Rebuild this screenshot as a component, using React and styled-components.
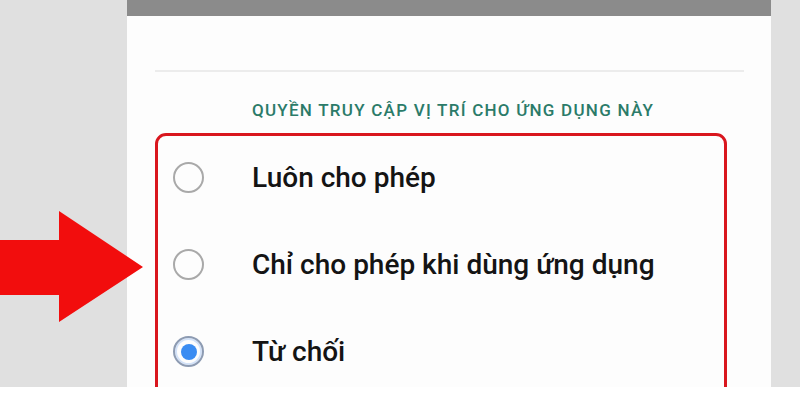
import React from "react";
import styled, { createGlobalStyle } from "styled-components";

const GlobalStyle = createGlobalStyle`
  html, body {
    margin: 0;
    padding: 0;
    background: #ffffff;
  }
  body {
    font-family: Roboto, "Noto Sans", "Liberation Sans", sans-serif;
  }
`;

const HEADER_TEXT = "QUYỀN TRUY CẬP VỊ TRÍ CHO ỨNG DỤNG NÀY";

const options = [
  { id: "always", label: "Luôn cho phép", checked: false },
  { id: "while-using", label: "Chỉ cho phép khi dùng ứng dụng", checked: false },
  { id: "deny", label: "Từ chối", checked: true },
];

const Arrow = () => (
  <ArrowWrap>
    <svg width="146" height="112" viewBox="0 0 146 112">
      <polygon points="0,29 59,29 59,0 143,56 59,111 59,84 0,84" fill="#f20d0d" />
    </svg>
  </ArrowWrap>
);

const App = () => {
  return (
    <>
      <GlobalStyle />
      <Page>
        <SideGutter />
        <PhonePanel>
          <StatusBar />
          <Content>
            <Divider />
            <SectionTitle>{HEADER_TEXT}</SectionTitle>
            <HighlightBox>
              {options.map(({ id, label, checked }) => (
                <OptionRow key={id}>
                  <Radio checked={checked} />
                  <OptionLabel>{label}</OptionLabel>
                </OptionRow>
              ))}
            </HighlightBox>
          </Content>
        </PhonePanel>
        <SideGutter narrow />
        <Arrow />
      </Page>
    </>
  );
};

const Page = styled.div`
  position: relative;
  display: flex;
  width: 800px;
  height: 387px;
  overflow: hidden;
`;

const SideGutter = styled.div`
  flex: none;
  width: ${({ narrow }) => (narrow ? "29px" : "127px")};
  background: #e0e0e0;
`;

const PhonePanel = styled.div`
  flex: none;
  width: 644px;
  display: flex;
  flex-direction: column;
  overflow: hidden;
  background: #fdfdfd;
`;

const StatusBar = styled.div`
  flex: none;
  height: 16px;
  background: #8b8b8b;
`;

const Content = styled.div`
  flex: none;
  display: flex;
  flex-direction: column;
  padding: 0 27px 0 28px;
`;

const Divider = styled.div`
  flex: none;
  height: 2px;
  margin-top: 54px;
  background: #ececec;
`;

const SectionTitle = styled.div`
  flex: none;
  margin-top: 28px;
  padding-left: 97px;
  font-size: 17px;
  line-height: 20px;
  font-weight: 500;
  letter-spacing: 1.25px;
  color: #2b7b69;
  white-space: nowrap;
`;

const HighlightBox = styled.div`
  flex: none;
  width: 566px;
  margin-top: 13px;
  height: 300px;
  border: 3px solid #d9161e;
  border-radius: 11px;
`;

const OptionRow = styled.div`
  display: flex;
  align-items: center;
  height: 87px;
  padding: 0 0 4px 15px;
  box-sizing: border-box;
`;

const Radio = styled.span`
  flex: none;
  position: relative;
  width: 31px;
  height: 31px;
  box-sizing: border-box;
  border-radius: 50%;
  border: 2px solid ${({ checked }) => (checked ? "#8d9bb2" : "#a9a9a9")};
  box-shadow: ${({ checked }) => (checked ? "inset 0 0 0 2px #d3e2f8" : "none")};

  &::after {
    content: "";
    display: ${({ checked }) => (checked ? "block" : "none")};
    position: absolute;
    left: 50%;
    top: 50%;
    width: 16px;
    height: 16px;
    margin: -8px 0 0 -8px;
    border-radius: 50%;
    background: #3a8cf2;
  }
`;

const OptionLabel = styled.span`
  margin-left: 48px;
  font-size: 28px;
  font-weight: 500;
  color: #141414;
  white-space: nowrap;
`;

const ArrowWrap = styled.div`
  position: absolute;
  left: 0;
  top: 211px;
  line-height: 0;
`;

export default App;
